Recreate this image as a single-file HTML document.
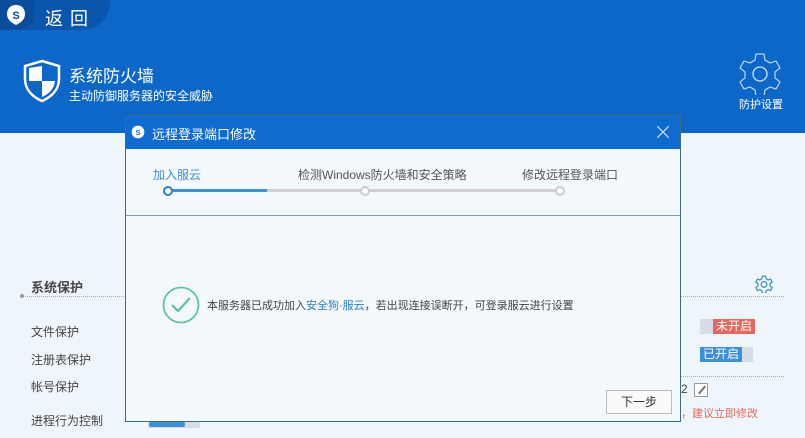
<!DOCTYPE html>
<html><head><meta charset="utf-8"><style>
*{margin:0;padding:0;box-sizing:border-box}
body{width:805px;height:438px;overflow:hidden;background:#eff6fb;font-family:"Liberation Sans","Noto Sans CJK SC",sans-serif;position:relative;color:#333}
.hdr{position:absolute;left:0;top:0;width:805px;height:133px;background:#0c67c9}
.tab{position:absolute;left:0;top:0;width:110px;height:30px;background:#0a56ad;border-bottom-right-radius:28px}
.tabl{position:absolute;left:0;top:0;width:34px;height:30px;background:#0a4d9c;border-bottom-right-radius:16px}
.abs{position:absolute;white-space:nowrap}
.dlg{position:absolute;left:125px;top:115px;width:556px;height:307px;background:#f2f8fc;border:1px solid #3d6b80}
.dh{position:absolute;left:0;top:0;width:554px;height:33px;background:#0e6bd0}
.badge{position:absolute;height:15px;font-size:12px;line-height:15px;color:#fff;padding:0 3px}
</style></head><body>
<div class="hdr"></div>
<div class="tab"></div><div class="tabl"></div>
<svg class="abs" style="left:5px;top:4px" width="22" height="22" viewBox="0 0 22 22"><path d="M11 1 C17 1 20 5 20 10 C20 16 15 19 11 21 C7 19 2 16 2 10 C2 5 5 1 11 1 Z" fill="#fff"/><text x="11" y="15" font-size="11" font-weight="bold" text-anchor="middle" fill="#0a4d9c" font-family="Liberation Sans">S</text></svg>
<div class="abs" style="left:45px;top:5px;font-size:18px;color:#fff;letter-spacing:7px">返回</div>
<svg class="abs" style="left:22px;top:59px" width="40" height="44" viewBox="0 0 40 44"><path d="M20 2 L37 7 V20 C37 31 29 38 20 42 C11 38 3 31 3 20 V7 Z" fill="none" stroke="#fff" stroke-width="2.5"/><path d="M20 7 V22 H7 V9 Z" fill="#fff"/><path d="M20 22 H33 C32 30 27 35 20 38 Z" fill="#fff"/></svg>
<div class="abs" style="left:69px;top:62px;font-size:17px;color:#fff">系统防火墙</div>
<div class="abs" style="left:69px;top:87px;font-size:12px;color:#fff">主动防御服务器的安全威胁</div>
<svg class="abs" style="left:738px;top:51px" width="44" height="44" viewBox="0 0 44 44"><path d="M18 3h8l1 6 5 3 6-2 4 7-5 4v6l5 4-4 7-6-2-5 3-1 6h-8l-1-6-5-3-6 2-4-7 5-4v-6l-5-4 4-7 6 2 5-3z" fill="none" stroke="#cfe2f5" stroke-width="1.1"/><circle cx="22" cy="23" r="7" fill="none" stroke="#cfe2f5" stroke-width="1.3"/></svg>
<div class="abs" style="left:739px;top:96px;font-size:11px;color:#fff">防护设置</div>

<div class="abs" style="left:31px;top:277px;font-size:13px;font-weight:bold;color:#444">系统保护</div>
<div class="abs" style="left:20px;top:296px;width:764px;border-top:1px dotted #aab"></div>
<div class="abs" style="left:20px;top:294px;width:4px;height:4px;border-radius:2px;background:#99a"></div>
<div class="abs" style="left:31px;top:323px;font-size:12px;color:#444">文件保护</div>
<div class="abs" style="left:31px;top:351px;font-size:12px;color:#444">注册表保护</div>
<div class="abs" style="left:31px;top:378px;font-size:12px;color:#444">帐号保护</div>
<div class="abs" style="left:31px;top:412px;font-size:12px;color:#444">进程行为控制</div>
<div class="abs" style="left:148px;top:422px;width:52px;height:6px;background:#d5dde6"></div>
<div class="abs" style="left:149px;top:422px;width:36px;height:5px;background:#3d8fd8;border-radius:2px"></div>
<svg class="abs" style="left:755px;top:275px" width="18" height="18" viewBox="0 0 44 44"><path d="M18 3h8l1 6 5 3 6-2 4 7-5 4v6l5 4-4 7-6-2-5 3-1 6h-8l-1-6-5-3-6 2-4-7 5-4v-6l-5-4 4-7 6 2 5-3z" fill="none" stroke="#3d8fb0" stroke-width="3"/><circle cx="22" cy="23" r="7" fill="none" stroke="#3d8fb0" stroke-width="3"/></svg>
<div class="abs" style="left:700px;top:319px;width:53px;height:15px;background:#d6dde6"></div>
<div class="badge" style="left:713px;top:319px;background:#e4685d">未开启</div>
<div class="abs" style="left:700px;top:347px;width:53px;height:15px;background:#d6dde6"></div>
<div class="badge" style="left:700px;top:347px;background:#3d8fd8">已开启</div>
<div class="abs" style="left:680px;top:376px;width:104px;border-top:1px dotted #aab"></div>
<div class="abs" style="left:681px;top:382px;font-size:12px;color:#444">2</div>
<div class="abs" style="left:694px;top:383px;width:14px;height:14px;border:1px solid #999;background:#fff"></div>
<div class="abs" style="left:697px;top:389px;width:10px;height:2px;background:#777;transform:rotate(-50deg)"></div>
<div class="abs" style="left:681px;top:405px;font-size:11px;color:#e4685d">，建议立即修改</div>

<div class="dlg">
<div class="dh"></div>
<svg class="abs" style="left:5px;top:9px" width="14" height="14" viewBox="0 0 22 22"><circle cx="11" cy="11" r="10" fill="#fff"/><text x="11" y="15.5" font-size="12" font-weight="bold" text-anchor="middle" fill="#0e6bd0" font-family="Liberation Sans">S</text></svg>
<div class="abs" style="left:26px;top:8px;font-size:13px;color:#fff">远程登录端口修改</div>
<svg class="abs" style="left:531px;top:10px" width="12" height="12" viewBox="0 0 12 12"><path d="M0 0L12 12M12 0L0 12" stroke="#cfe0f3" stroke-width="1.2"/></svg>
<div class="abs" style="left:27px;top:50px;font-size:12px;color:#3d8fd8">加入服云</div>
<div class="abs" style="left:172px;top:50px;font-size:12px;color:#555">检测Windows防火墙和安全策略</div>
<div class="abs" style="left:396px;top:50px;font-size:12px;color:#555">修改远程登录端口</div>
<div class="abs" style="left:42px;top:73px;width:392px;height:3px;background:#d0d0d4"></div>
<div class="abs" style="left:42px;top:73px;width:99px;height:3px;background:#3d8fd8"></div>
<div class="abs" style="left:37px;top:70px;width:10px;height:10px;border-radius:5px;background:#fff;border:2.5px solid #2d7fc8"></div>
<div class="abs" style="left:234px;top:70px;width:10px;height:10px;border-radius:5px;background:#fff;border:2.5px solid #ccc"></div>
<div class="abs" style="left:429px;top:70px;width:10px;height:10px;border-radius:5px;background:#fff;border:2.5px solid #ccc"></div>
<div class="abs" style="left:0;top:99px;width:554px;border-top:1px solid #7a9fb0"></div>
<svg class="abs" style="left:36px;top:170px" width="38" height="38" viewBox="0 0 38 38"><circle cx="19" cy="19" r="17.5" fill="none" stroke="#5ec49a" stroke-width="1.8"/><path d="M10 19 L16 25 L28 12" fill="none" stroke="#5ec49a" stroke-width="2.2"/></svg>
<div class="abs" style="left:81px;top:181px;font-size:11px;color:#444">本服务器已成功加入<span style="color:#2d7fc8">安全狗·服云</span>，若出现连接误断开，可登录服云进行设置</div>
<div class="abs" style="left:480px;top:274px;width:66px;height:24px;border:1px solid #bbb;background:#fafafa;font-size:12px;line-height:22px;text-align:center;color:#333">下一步</div>
</div>
</body></html>
